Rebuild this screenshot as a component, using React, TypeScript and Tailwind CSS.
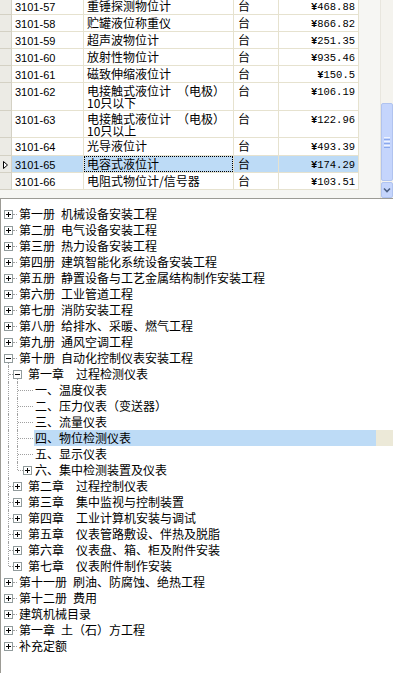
import React from 'react';

type Row = { code: string; name: string[]; price: string; h: string; sel?: boolean };

const rows: Row[] = [
  { code: '3101-57', name: ['重锤探测物位计'], price: '468.88', h: 'h-[17px]' },
  { code: '3101-58', name: ['贮罐液位称重仪'], price: '866.82', h: 'h-[17px]' },
  { code: '3101-59', name: ['超声波物位计'], price: '251.35', h: 'h-[17px]' },
  { code: '3101-60', name: ['放射性物位计'], price: '935.46', h: 'h-[17px]' },
  { code: '3101-61', name: ['磁致伸缩液位计'], price: '150.5', h: 'h-[17px]' },
  { code: '3101-62', name: ['电接触式液位计\u2002（电极）', '10只以下'], price: '106.19', h: 'h-[28px]' },
  { code: '3101-63', name: ['电接触式液位计\u2002（电极）', '10只以上'], price: '122.96', h: 'h-[27px]' },
  { code: '3101-64', name: ['光导液位计'], price: '493.39', h: 'h-[18px]' },
  { code: '3101-65', name: ['电容式液位计'], price: '174.29', h: 'h-[17px]', sel: true },
  { code: '3101-66', name: ['电阻式物位计/信号器'], price: '103.51', h: 'h-[17px]' },
];

type V = { x: string; t: 'full' | 'top' | 'bottom' };
type T = { l: 0 | 1 | 2; k: 'plus' | 'minus' | 'leaf'; t: string; v?: V[]; sel?: boolean };

const L7 = 'left-[7px]';
const L16 = 'left-[16px]';

const tree: T[] = [
  { l: 0, k: 'plus', t: '第一册\u2002机械设备安装工程' },
  { l: 0, k: 'plus', t: '第二册\u2002电气设备安装工程' },
  { l: 0, k: 'plus', t: '第三册\u2002热力设备安装工程' },
  { l: 0, k: 'plus', t: '第四册\u2002建筑智能化系统设备安装工程' },
  { l: 0, k: 'plus', t: '第五册\u2002静置设备与工艺金属结构制作安装工程' },
  { l: 0, k: 'plus', t: '第六册\u2002工业管道工程' },
  { l: 0, k: 'plus', t: '第七册\u2002消防安装工程' },
  { l: 0, k: 'plus', t: '第八册\u2002给排水、采暖、燃气工程' },
  { l: 0, k: 'plus', t: '第九册\u2002通风空调工程' },
  { l: 0, k: 'minus', t: '第十册\u2002自动化控制仪表安装工程', v: [{ x: L7, t: 'bottom' }] },
  { l: 1, k: 'minus', t: '第一章　过程检测仪表', v: [{ x: L7, t: 'full' }, { x: L16, t: 'bottom' }] },
  { l: 2, k: 'leaf', t: '一、温度仪表', v: [{ x: L7, t: 'full' }, { x: L16, t: 'full' }] },
  { l: 2, k: 'leaf', t: '二、压力仪表（变送器）', v: [{ x: L7, t: 'full' }, { x: L16, t: 'full' }] },
  { l: 2, k: 'leaf', t: '三、流量仪表', v: [{ x: L7, t: 'full' }, { x: L16, t: 'full' }] },
  { l: 2, k: 'leaf', t: '四、物位检测仪表', v: [{ x: L7, t: 'full' }, { x: L16, t: 'full' }], sel: true },
  { l: 2, k: 'leaf', t: '五、显示仪表', v: [{ x: L7, t: 'full' }, { x: L16, t: 'full' }] },
  { l: 2, k: 'plus', t: '六、集中检测装置及仪表', v: [{ x: L7, t: 'full' }, { x: L16, t: 'top' }] },
  { l: 1, k: 'plus', t: '第二章　过程控制仪表', v: [{ x: L7, t: 'full' }] },
  { l: 1, k: 'plus', t: '第三章　集中监视与控制装置', v: [{ x: L7, t: 'full' }] },
  { l: 1, k: 'plus', t: '第四章　工业计算机安装与调试', v: [{ x: L7, t: 'full' }] },
  { l: 1, k: 'plus', t: '第五章　仪表管路敷设、伴热及脱脂', v: [{ x: L7, t: 'full' }] },
  { l: 1, k: 'plus', t: '第六章　仪表盘、箱、柜及附件安装', v: [{ x: L7, t: 'full' }] },
  { l: 1, k: 'plus', t: '第七章　仪表附件制作安装', v: [{ x: L7, t: 'top' }] },
  { l: 0, k: 'plus', t: '第十一册\u2002刷油、防腐蚀、绝热工程' },
  { l: 0, k: 'plus', t: '第十二册\u2002费用' },
  { l: 0, k: 'plus', t: '建筑机械目录' },
  { l: 0, k: 'plus', t: '第一章\u2002土（石）方工程' },
  { l: 0, k: 'plus', t: '补充定额' },
];

const cjk = "font-['Noto_Sans_CJK_SC',sans-serif]";

function Box({ minus, pos }: { minus: boolean; pos: string }) {
  return (
    <span className={`absolute top-[4px] ${pos} w-[9px] h-[9px] border border-[#919b9c] bg-white`}>
      <span className="absolute left-[1px] top-[3px] w-[5px] h-[1px] bg-black" />
      {!minus && <span className="absolute left-[3px] top-[1px] w-[1px] h-[5px] bg-black" />}
    </span>
  );
}

function TreeRow({ r }: { r: T }) {
  const gutter = r.l === 0 ? 'w-[18px]' : r.l === 1 ? 'w-[27px]' : r.sel ? 'w-[33px]' : 'w-[34px]';
  return (
    <div className={`relative flex h-4 ${cjk} text-[12px] leading-4 text-black`}>
      {r.v?.map((v, i) => (
        <span
          key={i}
          className={`absolute ${v.x} w-0 border-l border-dotted border-[#a0a0a0] ${
            v.t === 'full' ? 'top-0 h-4' : v.t === 'top' ? 'top-0 h-[8px]' : 'top-[13px] h-[3px]'
          }`}
        />
      ))}
      {r.l === 0 && (
        <>
          <span className="absolute left-[12px] top-[8px] w-[4px] h-0 border-t border-dotted border-[#a0a0a0]" />
          <Box minus={r.k === 'minus'} pos="left-[3px]" />
        </>
      )}
      {r.l === 1 && (
        <>
          <span className="absolute left-[8px] top-[8px] w-[4px] h-0 border-t border-dotted border-[#a0a0a0]" />
          <Box minus={r.k === 'minus'} pos="left-[12px]" />
        </>
      )}
      {r.l === 2 && r.k === 'leaf' && (
        <span className="absolute left-[17px] top-[8px] w-[15px] h-0 border-t border-dotted border-[#a0a0a0]" />
      )}
      {r.l === 2 && r.k === 'plus' && (
        <>
          <span className="absolute left-[17px] top-[8px] w-[5px] h-0 border-t border-dotted border-[#a0a0a0]" />
          <Box minus={false} pos="left-[22px]" />
        </>
      )}
      <span className={`shrink-0 ${gutter}`} />
      <span className={`flex-1 whitespace-nowrap ${r.sel ? 'bg-[#bddbf6] pl-[1px]' : ''}`}>{r.t}</span>
      <span className={`shrink-0 w-[17px] ${r.sel ? 'bg-[#ece9d8]' : ''}`} />
    </div>
  );
}

function Scrollbar() {
  return (
    <div className="flex flex-col w-[13px] bg-[#f4f3ee] border-l border-[#e8e6de]">
      <div className="h-[103px]" />
      <div className="h-[78px] rounded-[2px] border border-[#b0c3ef] bg-[#c5d5fc] flex flex-col items-center justify-center gap-[1px]">
        <span className="w-[6px] h-[1px] bg-[#eef3fe]" />
        <span className="w-[6px] h-[1px] bg-[#8aa8ec]" />
        <span className="w-[6px] h-[1px] bg-[#eef3fe]" />
        <span className="w-[6px] h-[1px] bg-[#8aa8ec]" />
        <span className="w-[6px] h-[1px] bg-[#eef3fe]" />
        <span className="w-[6px] h-[1px] bg-[#8aa8ec]" />
      </div>
      <div className="mt-[1px] h-[16px] rounded-[2px] border border-[#b0c3ef] bg-[#c5d5fc] flex items-center justify-center">
        <svg width="8" height="6" viewBox="0 0 8 6">
          <path d="M1 1.5 L4 4.5 L7 1.5" fill="none" stroke="#4d6185" strokeWidth="1.6" />
        </svg>
      </div>
    </div>
  );
}

export default function App() {
  return (
    <div className="w-[393px] h-[673px] overflow-hidden bg-white">
      <div className="flex h-[198px] bg-[#f6f6f3] overflow-hidden">
        <div className="w-[380px] overflow-hidden">
          <div className="-mt-[2px]">
            {rows.map((r) => (
              <div key={r.code} className={`flex ${r.h}`}>
                <div className="relative w-[12px] shrink-0 bg-[#ecebe5] border-r border-b border-[#d4d1c4]">
                  {r.sel && (
                    <svg className="absolute left-[3px] top-[5px]" width="5" height="8" viewBox="0 0 5 8">
                      <path d="M0.5 0.5 L4.5 4 L0.5 7.5 Z" fill="white" stroke="black" strokeWidth="1" />
                    </svg>
                  )}
                </div>
                <div
                  className={`w-[72px] shrink-0 border-r border-b border-[#e6e2cf] pl-[3px] pt-[3px] font-['Liberation_Sans',sans-serif] text-[11px] leading-[12px] text-black ${
                    r.sel ? 'bg-[#bddbf6]' : 'bg-white'
                  }`}
                >
                  {r.code}
                </div>
                <div
                  className={`w-[150px] shrink-0 border-b border-r border-[#e6e2cf] ${r.sel ? 'bg-[#bddbf6]' : 'bg-white'}`}
                >
                  <div
                    className={`h-full pl-[3px] pt-[2px] ${cjk} text-[12px] leading-[12px] text-black ${
                      r.sel ? 'outline outline-1 outline-dotted outline-black -outline-offset-1' : ''
                    }`}
                  >
                    {r.name.map((n) => (
                      <div key={n} className="whitespace-nowrap">
                        {n}
                      </div>
                    ))}
                  </div>
                </div>
                <div
                  className={`w-[45px] shrink-0 border-r border-b border-[#e6e2cf] pl-[4px] pt-[2px] ${cjk} text-[12px] leading-[12px] text-black ${
                    r.sel ? 'bg-[#bddbf6]' : 'bg-white'
                  }`}
                >
                  台
                </div>
                <div
                  className={`w-[80px] shrink-0 border-r border-b border-[#e6e2cf] pr-[3px] pt-[3px] text-right font-['Liberation_Mono',monospace] text-[10.5px] leading-[12px] text-black ${
                    r.sel ? 'bg-[#bddbf6]' : 'bg-white'
                  }`}
                >
                  <span className="font-bold">¥</span>
                  {r.price}
                </div>
              </div>
            ))}
          </div>
        </div>
        <Scrollbar />
      </div>
      <div className="h-[475px] border-t border-l border-[#9c9b95] bg-white pt-[7px]">
        {tree.map((r) => (
          <TreeRow key={r.t} r={r} />
        ))}
      </div>
    </div>
  );
}
